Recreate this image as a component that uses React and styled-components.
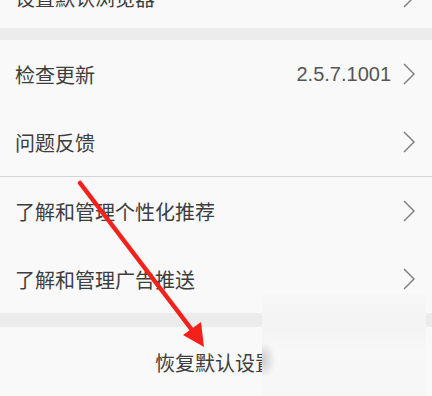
import React from "react";
import styled, { createGlobalStyle } from "styled-components";

const GlobalStyle = createGlobalStyle`
  html, body {
    margin: 0;
    padding: 0;
    background: #ececec;
  }
  body {
    font-family: "Noto Sans CJK SC", "Noto Sans", sans-serif;
  }
`;

const Page = styled.div`
  position: relative;
  width: 432px;
  height: 396px;
  overflow: hidden;
  background: #ececec;
`;

const Group = styled.section`
  background: #f9f9f9;
  margin-top: ${(p) => p.$top || 0}px;
  margin-bottom: ${(p) => p.$bottom || 0}px;
`;

const Row = styled.div`
  display: flex;
  align-items: center;
  height: ${(p) => p.$h || 68}px;
  padding: 0 17px 0 15px;
  border-bottom: ${(p) => (p.$divider ? "1px solid #d4d4d4" : "none")};
  justify-content: ${(p) => (p.$center ? "center" : "flex-start")};
`;

const Label = styled.span`
  flex: ${(p) => (p.$center ? "none" : 1)};
  font-size: 20px;
  color: #3d3d3d;
`;

const Value = styled.span`
  font-family: "Liberation Sans", "Noto Sans", sans-serif;
  font-size: 20px;
  color: #555;
  margin-right: 12px;
`;

const Chevron = () => (
  <svg width="12" height="22" viewBox="0 0 12 22">
    <path d="M1 1 L11 11 L1 21" fill="none" stroke="#7a7a7a" strokeWidth="1.4" />
  </svg>
);

const BlurPatch = styled.div`
  position: absolute;
  left: 262px;
  top: 294px;
  width: 164px;
  bottom: 0;
  background:
    radial-gradient(ellipse 14px 18px at 0px 66px, rgba(120, 120, 120, 0.35), transparent),
    linear-gradient(180deg, #f7f7f7 0%, #f3f3f3 30%, #f8f8f8 60%, #f6f6f6 100%);
`;

const Arrow = styled.svg`
  position: absolute;
  left: 0;
  top: 0;
  pointer-events: none;
`;

export default function App() {
  return (
    <Page>
      <GlobalStyle />
      <Group $top={-34} $bottom={12}>
        <Row $h={62}>
          <Label>设置默认浏览器</Label>
          <Chevron />
        </Row>
      </Group>
      <Group $bottom={14}>
        <Row>
          <Label>检查更新</Label>
          <Value>2.5.7.1001</Value>
          <Chevron />
        </Row>
        <Row $divider>
          <Label>问题反馈</Label>
          <Chevron />
        </Row>
        <Row>
          <Label>了解和管理个性化推荐</Label>
          <Chevron />
        </Row>
        <Row>
          <Label>了解和管理广告推送</Label>
          <Chevron />
        </Row>
      </Group>
      <Group>
        <Row $h={70} $center>
          <Label $center>恢复默认设置</Label>
        </Row>
      </Group>
      <BlurPatch />
      <Arrow width="432" height="396" viewBox="0 0 432 396">
        <line x1="80" y1="183" x2="192" y2="330" stroke="#f4201b" strokeWidth="4.5" strokeLinecap="round" />
        <polygon points="183,335 201,322 204,347" fill="#f4201b" />
      </Arrow>
    </Page>
  );
}
